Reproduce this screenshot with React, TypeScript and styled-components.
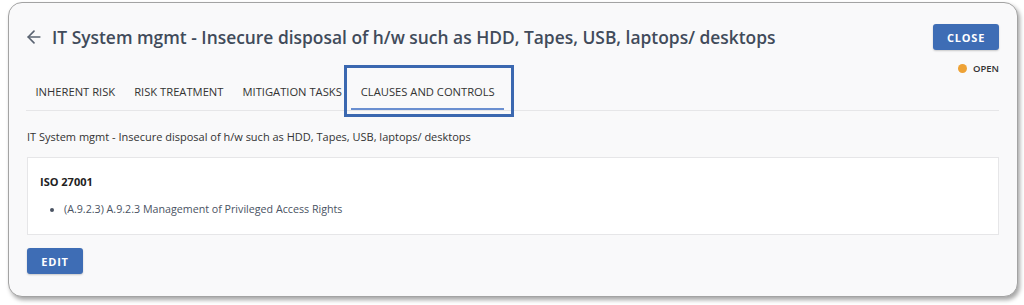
import styled, { createGlobalStyle } from "styled-components";
import { ArrowLeft } from "lucide-react";

const GlobalStyle = createGlobalStyle`
    body {
        margin: 0;
        background: #ffffff;
        font-family: "Open Sans", "Liberation Sans", sans-serif;
    }
`

const tabs = ["Inherent Risk", "Risk Treatment", "Mitigation Tasks", "Clauses and Controls"]
const activeTab = 3
const description = "IT System mgmt - Insecure disposal of h/w such as HDD, Tapes, USB, laptops/ desktops"

function App() {
    return (
    <Page>
        <GlobalStyle />
        <Card>
            <Header>
                <TitleRow>
                    <BackButton aria-label="back">
                        <ArrowLeft size={20} strokeWidth={2} />
                    </BackButton>
                    <Title>{description}</Title>
                </TitleRow>
                <Button>Close</Button>
            </Header>
            <StatusRow>
                <StatusDot />
                <StatusText>Open</StatusText>
            </StatusRow>
            <TabList>
                {tabs.map((t, i) => (
                    <Tab key={t} $active={i === activeTab}>
                        {t}
                        {i === activeTab && <Highlight />}
                    </Tab>
                ))}
            </TabList>
            <Description>{description}</Description>
            <Panel>
                <PanelTitle>ISO 27001</PanelTitle>
                <ClauseList>
                    <li>(A.9.2.3) A.9.2.3 Management of Privileged Access Rights</li>
                </ClauseList>
            </Panel>
            <Footer>
                <Button $small>Edit</Button>
            </Footer>
        </Card>
    </Page>
    )
}

export default App

const Page = styled.div`
    padding: 2px 6px 8px 8px;
`

const Card = styled.div`
    box-sizing: border-box;
    width: 1010px;
    height: 295px;
    background: #f9f9fa;
    border: 1px solid #a3a3a3;
    border-radius: 14px;
    box-shadow: 2px 3px 4px rgba(0, 0, 0, 0.35);
    padding: 21px 18px 0 18px;
`

const Header = styled.div`
    display: flex;
    align-items: center;
    justify-content: space-between;
`

const TitleRow = styled.div`
    display: flex;
    align-items: center;
    gap: 8px;
`

const BackButton = styled.span`
    display: flex;
    color: #5b6472;
    margin-left: -3px;
`

const Title = styled.h1`
    margin: 0;
    font-size: 17.4px;
    font-weight: 600;
    color: #414b5a;
`

const Button = styled.button<{ $small?: boolean }>`
    height: 26px;
    width: ${p => p.$small ? "56px" : "66px"};
    padding: 0;
    border: none;
    border-radius: 3px;
    background: #3e6db5;
    color: #ffffff;
    font-family: "Open Sans", "Liberation Sans", sans-serif;
    font-size: 11px;
    font-weight: 700;
    letter-spacing: 0.8px;
    text-transform: uppercase;
    box-shadow: 0 1px 2px rgba(0, 0, 0, 0.2);
`

const StatusRow = styled.div`
    display: flex;
    justify-content: flex-end;
    align-items: center;
    gap: 6px;
    height: 14px;
    margin-top: 11px;
`

const StatusDot = styled.span`
    width: 9px;
    height: 9px;
    border-radius: 50%;
    background: #eea235;
`

const StatusText = styled.span`
    font-size: 9.5px;
    font-weight: 600;
    color: #333;
    text-transform: uppercase;
`

const TabList = styled.div`
    display: flex;
    margin-top: 9px;
    margin-left: -1px;
    border-bottom: 1px solid #e6e6e8;
`

const Tab = styled.div<{ $active?: boolean }>`
    position: relative;
    padding: 0 9.5px 8px;
    line-height: 16px;
    font-size: 11.2px;
    color: #333;
    text-transform: uppercase;
    border-bottom: 2px solid ${p => p.$active ? "#6a8fd0" : "transparent"};
`

const Highlight = styled.span`
    position: absolute;
    top: -19px;
    left: -7px;
    right: -10px;
    bottom: -9px;
    border: 3px solid #3b68b0;
    pointer-events: none;
`

const Description = styled.p`
    margin: 18px 0 0;
    line-height: 16px;
    font-size: 11px;
    color: #333;
`

const Panel = styled.div`
    margin-top: 12px;
    background: #ffffff;
    border: 1px solid #e6e6e8;
    padding: 16px 12px 17px;
`

const PanelTitle = styled.div`
    line-height: 16px;
    font-size: 11px;
    font-weight: 700;
    color: #222;
`

const ClauseList = styled.ul`
    margin: 11px 0 0;
    padding-left: 24px;
    line-height: 16px;
    font-size: 10.7px;
    color: #4a5363;
`

const Footer = styled.div`
    margin-top: 13px;
`
